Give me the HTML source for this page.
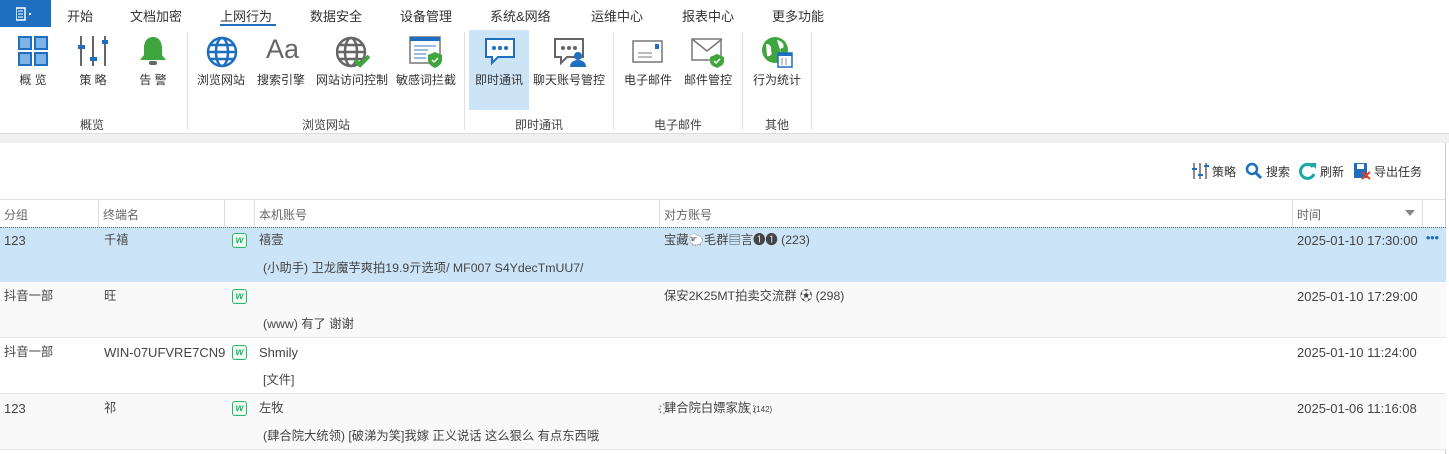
<!DOCTYPE html>
<html><head><meta charset="utf-8"><style>
*{margin:0;padding:0;box-sizing:border-box}
body{width:1449px;height:454px;overflow:hidden;background:#fff;font-family:"Liberation Sans","Noto Sans CJK SC",sans-serif;font-size:12px;color:#444;position:relative}
.a{position:absolute;white-space:nowrap}
.tab{font-size:13px;color:#333;top:6px}
.lbl{top:71px;font-size:12px;color:#333;text-align:center}
.grp{top:116px;font-size:12px;color:#444;text-align:center}
.sep{position:absolute;top:32px;width:1px;height:98px;background:#e2e2e2}
.row{position:absolute;left:0;width:1446px;height:56px}
.c{position:absolute;font-size:12.3px;color:#444;line-height:17px;white-space:nowrap}
.t{font-size:13px}
.w{position:absolute;width:15px;height:15px;border:1px solid #2db36a;border-radius:3px;color:#2db36a;font-size:10px;font-style:italic;font-weight:bold;text-align:center;line-height:13px;background:#eafff0}
.hd{position:absolute;top:200px;height:27px;border-right:1px solid #ddd;font-size:12px;color:#666;padding:6px 4px}
</style></head><body>
<div class="a" style="left:0;top:0;width:51px;height:27px;background:#1e6fc0"></div>
<svg class="a" style="left:16px;top:7px" width="20" height="14"><rect x="0" y="1" width="9" height="12" fill="none" stroke="#fff" stroke-width="1.5"/><path d="M2 4h5M2 7h5M2 10h5" stroke="#fff"/><rect x="13" y="6" width="2" height="2" fill="#fff"/></svg>
<div class="a tab" style="left:67px">开始</div>
<div class="a tab" style="left:130px">文档加密</div>
<div class="a tab" style="left:220px">上网行为</div>
<div class="a" style="left:220px;top:24px;width:56px;height:2px;background:#1e6fc0"></div>
<div class="a tab" style="left:310px">数据安全</div>
<div class="a tab" style="left:400px">设备管理</div>
<div class="a tab" style="left:490px">系统&amp;网络</div>
<div class="a tab" style="left:591px">运维中心</div>
<div class="a tab" style="left:682px">报表中心</div>
<div class="a tab" style="left:772px">更多功能</div>

<div class="a" style="left:469px;top:30px;width:60px;height:80px;background:#cde4f7"></div>
<svg class="a" style="left:18px;top:36px" width="30" height="30"><g fill="#7fb3e8" stroke="#1e6fc0" stroke-width="2"><rect x="1" y="1" width="12" height="12"/><rect x="17" y="1" width="12" height="12"/><rect x="1" y="17" width="12" height="12"/><rect x="17" y="17" width="12" height="12"/></g></svg>
<svg class="a" style="left:78px;top:36px" width="30" height="30"><path d="M3 0v30M15 0v30M27 0v30" stroke="#666" stroke-width="2"/><rect x="0" y="9" width="7" height="4" fill="#1e6fc0"/><rect x="12" y="21" width="7" height="4" fill="#1e6fc0"/><rect x="24" y="4" width="7" height="4" fill="#1e6fc0"/></svg>
<svg class="a" style="left:137px;top:35px" width="32" height="32"><path d="M16 2c-6 0-9 5-9 11v7l-4 5h26l-4-5v-7c0-6-3-11-9-11z" fill="#3fa63f"/><rect x="12" y="26" width="8" height="4" rx="2" fill="#666"/></svg>
<svg class="a" style="left:206px;top:36px" width="32" height="32"><g fill="none" stroke="#1e6fc0" stroke-width="2.5"><circle cx="16" cy="16" r="14"/><ellipse cx="16" cy="16" rx="6" ry="14"/><path d="M2 16h28M4 9h24M4 23h24"/></g></svg>
<div class="a" style="left:266px;top:34px;font-size:27px;color:#666">Aa</div>
<svg class="a" style="left:336px;top:36px" width="34" height="32"><g fill="none" stroke="#666" stroke-width="2.5"><circle cx="15" cy="16" r="14"/><ellipse cx="15" cy="16" rx="6" ry="14"/><path d="M1 16h28M3 9h24M3 23h24"/></g><path d="M19 24l5 5 9-9" stroke="#3fa63f" stroke-width="4" fill="none"/></svg>
<svg class="a" style="left:409px;top:36px" width="34" height="32"><rect x="1" y="1" width="30" height="26" fill="#fff" stroke="#777" stroke-width="1.5"/><rect x="1" y="1" width="30" height="4" fill="#1e6fc0"/><path d="M5 10h22M5 14h14M5 18h12M5 22h12" stroke="#9bbbe0" stroke-width="2"/><path d="M26 16l7 3v5c0 4-3 6-7 8-4-2-7-4-7-8v-5z" fill="#3fa63f"/><path d="M23 24l2 2 4-4" stroke="#fff" stroke-width="1.5" fill="none"/></svg>
<svg class="a" style="left:484px;top:37px" width="32" height="28"><path d="M2 2h28v18H14l-6 6v-6H2z" fill="#fff" stroke="#1e6fc0" stroke-width="2"/><circle cx="10" cy="11" r="2" fill="#1e6fc0"/><circle cx="16" cy="11" r="2" fill="#1e6fc0"/><circle cx="22" cy="11" r="2" fill="#1e6fc0"/></svg>
<svg class="a" style="left:553px;top:37px" width="34" height="30"><path d="M2 2h28v18H14l-6 6v-6H2z" fill="#fff" stroke="#666" stroke-width="2"/><circle cx="10" cy="11" r="2" fill="#666"/><circle cx="16" cy="11" r="2" fill="#666"/><circle cx="22" cy="11" r="2" fill="#666"/><circle cx="25" cy="19" r="4" fill="#1e6fc0"/><path d="M17 30c0-5 4-7 8-7s8 2 8 7z" fill="#1e6fc0"/></svg>
<svg class="a" style="left:632px;top:40px" width="32" height="24"><rect x="1" y="1" width="29" height="21" fill="#fff" stroke="#777" stroke-width="1.5"/><rect x="23" y="4" width="4" height="5" fill="#1e6fc0"/><path d="M6 13h14M6 17h14" stroke="#777"/></svg>
<svg class="a" style="left:691px;top:38px" width="34" height="30"><rect x="1" y="1" width="29" height="21" fill="#fff" stroke="#777" stroke-width="1.5"/><path d="M1 1l15 12 15-12" fill="none" stroke="#777" stroke-width="1.5"/><path d="M26 16l7 3v4c0 4-3 5-7 7-4-2-7-3-7-7v-4z" fill="#3fa63f"/><path d="M23 23l2 2 4-4" stroke="#fff" stroke-width="1.5" fill="none"/></svg>
<svg class="a" style="left:761px;top:36px" width="32" height="32"><circle cx="14" cy="14" r="13" fill="#3fa63f"/><path d="M5 8c4 0 6 3 5 7 2 3-1 6-4 5M16 4c5 1 8 5 6 8-3 0-4 3-2 5" fill="#fff"/><rect x="17" y="17" width="14" height="14" fill="#fff" stroke="#1e6fc0" stroke-width="1.5"/><rect x="17" y="17" width="14" height="3" fill="#1e6fc0"/><path d="M21 22v7M25 22v7" stroke="#888"/></svg>

<div class="a lbl" style="left:8px;width:50px">概 览</div>
<div class="a lbl" style="left:68px;width:50px">策 略</div>
<div class="a lbl" style="left:128px;width:50px">告 警</div>
<div class="a lbl" style="left:197px">浏览网站</div>
<div class="a lbl" style="left:257px">搜索引擎</div>
<div class="a lbl" style="left:316px">网站访问控制</div>
<div class="a lbl" style="left:396px">敏感词拦截</div>
<div class="a lbl" style="left:475px">即时通讯</div>
<div class="a lbl" style="left:533px">聊天账号管控</div>
<div class="a lbl" style="left:624px">电子邮件</div>
<div class="a lbl" style="left:684px">邮件管控</div>
<div class="a lbl" style="left:753px">行为统计</div>
<div class="a grp" style="left:80px">概览</div>
<div class="a grp" style="left:302px">浏览网站</div>
<div class="a grp" style="left:515px">即时通讯</div>
<div class="a grp" style="left:654px">电子邮件</div>
<div class="a grp" style="left:765px">其他</div>
<div class="sep" style="left:187px"></div><div class="sep" style="left:464px"></div><div class="sep" style="left:613px"></div><div class="sep" style="left:742px"></div><div class="sep" style="left:811px"></div>
<div class="a" style="left:0;top:133px;width:1449px;height:1px;background:#ddd"></div>
<div class="a" style="left:0;top:134px;width:1449px;height:9px;background:#f0f0f0"></div>

<svg class="a" style="left:1191px;top:162px" width="18" height="18"><path d="M3 1v16M9 1v16M15 1v16" stroke="#666" stroke-width="1.5"/><rect x="1" y="6" width="5" height="2" fill="#1e6fc0"/><rect x="7" y="12" width="5" height="2" fill="#1e6fc0"/><rect x="13" y="3" width="5" height="2" fill="#1e6fc0"/></svg>
<div class="a" style="left:1212px;top:163px;color:#333">策略</div>
<svg class="a" style="left:1245px;top:162px" width="18" height="18"><circle cx="7" cy="7" r="5" fill="none" stroke="#1e6fc0" stroke-width="2.5"/><path d="M11 11l5 5" stroke="#1e6fc0" stroke-width="3"/></svg>
<div class="a" style="left:1266px;top:163px;color:#333">搜索</div>
<svg class="a" style="left:1299px;top:162px" width="18" height="18"><path d="M14 5a7 7 0 1 0 1 7" fill="none" stroke="#18a8a8" stroke-width="3"/><path d="M11 1h6v6z" fill="#18a8a8"/></svg>
<div class="a" style="left:1320px;top:163px;color:#333">刷新</div>
<svg class="a" style="left:1353px;top:162px" width="18" height="18"><rect x="1" y="1" width="13" height="15" fill="#1e6fc0"/><rect x="4" y="2" width="7" height="5" fill="#fff"/><path d="M9 10l8 7M17 10l-8 7" stroke="#e04020" stroke-width="2"/></svg>
<div class="a" style="left:1374px;top:163px;color:#333">导出任务</div>

<div class="a" style="left:0;top:199px;width:1446px;height:1px;background:#e2e2e2"></div>
<div class="hd" style="left:0;width:99px">分组</div>
<div class="hd" style="left:99px;width:126px">终端名</div>
<div class="hd" style="left:225px;width:30px"></div>
<div class="hd" style="left:255px;width:405px">本机账号</div>
<div class="hd" style="left:660px;width:633px">对方账号</div>
<div class="hd" style="left:1293px;width:130px">时间</div>
<svg class="a" style="left:1405px;top:210px" width="10" height="6"><path d="M0 0h10L5 6z" fill="#888"/></svg>
<div class="a" style="left:1445px;top:143px;width:1px;height:311px;background:#ccc"></div>

<div class="row" style="top:227px;background:#cce4f7;border-top:1px dotted #666;border-bottom:1px dotted #666"></div>
<div class="row" style="top:282px;background:#f9f9f9;border-bottom:1px solid #e6e6e6"></div>
<div class="row" style="top:338px;background:#fff;border-bottom:1px solid #e6e6e6"></div>
<div class="row" style="top:394px;background:#f9f9f9;border-bottom:1px solid #e6e6e6"></div>

<div class="c t" style="left:4px;top:232px">123</div><div class="c" style="left:104px;top:232px">千禧</div><div class="w" style="left:232px;top:233px">w</div><div class="c" style="left:259px;top:232px">禧壹</div><div class="c" style="left:664px;top:232px">宝藏🐑毛群▤言❶❶ (223)</div><div class="c t" style="left:1297px;top:232px">2025-01-10 17:30:00</div><div class="c" style="left:1426px;top:230px;color:#1e6fc0;font-weight:bold">•••</div>
<div class="c" style="left:263px;top:260px">(小助手) 卫龙魔芋爽拍19.9亓选项/ MF007 S4YdecTmUU7/</div>

<div class="c" style="left:4px;top:288px">抖音一部</div><div class="c" style="left:104px;top:288px">旺</div><div class="w" style="left:232px;top:289px">w</div><div class="c" style="left:664px;top:288px">保安2K25MT拍卖交流群 ⚽ (298)</div><div class="c t" style="left:1297px;top:288px">2025-01-10 17:29:00</div>
<div class="c" style="left:263px;top:316px">(www) 有了 谢谢</div>

<div class="c" style="left:4px;top:344px">抖音一部</div><div class="c t" style="left:104px;top:344px">WIN-07UFVRE7CN9</div><div class="w" style="left:232px;top:345px">w</div><div class="c t" style="left:259px;top:344px">Shmily</div><div class="c t" style="left:1297px;top:344px">2025-01-10 11:24:00</div>
<div class="c" style="left:263px;top:372px">[文件]</div>

<div class="c t" style="left:4px;top:400px">123</div><div class="c" style="left:104px;top:400px">祁</div><div class="w" style="left:232px;top:401px">w</div><div class="c" style="left:259px;top:400px">左牧</div><div class="c" style="left:664px;top:400px">҉肆合院白嫖家族҉ <span style="font-size:8px">(142)</span></div><div class="c t" style="left:1297px;top:400px">2025-01-06 11:16:08</div>
<div class="c" style="left:263px;top:428px">(肆合院大统领) [破涕为笑]我嫁 正义说话 这么狠么 有点东西哦</div>
</body></html>
